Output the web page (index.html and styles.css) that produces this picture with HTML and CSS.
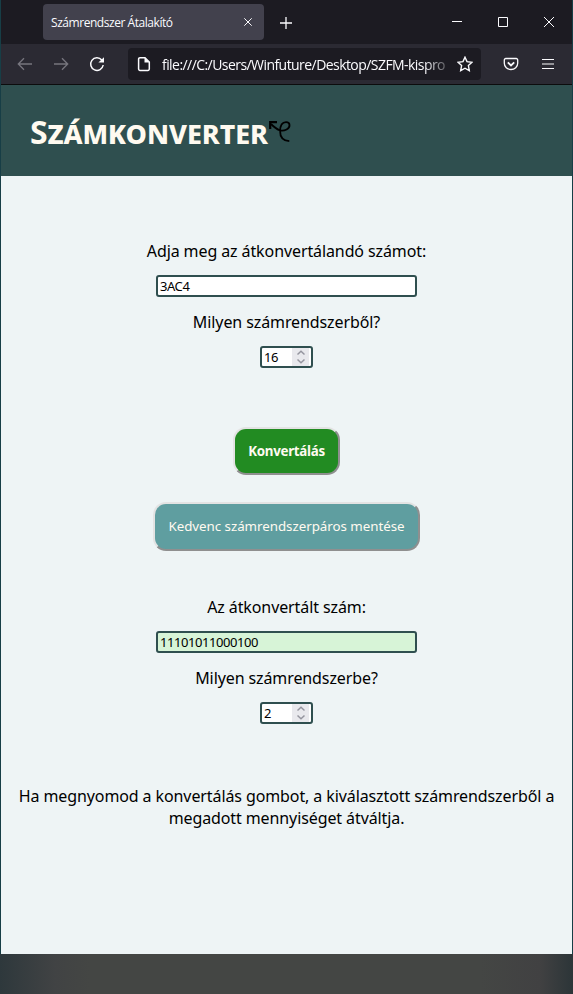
FILE: index.html
```html
<!DOCTYPE html>
<html lang="hu">
<head>
<meta charset="utf-8">
<title>Számrendszer Átalakító</title>
<link rel="stylesheet" href="styles.css">
</head>
<body>
<div class="window">
  <div class="tabbar">
    <div class="tab">
      <span class="tab-title">Számrendszer Átalakító</span>
      <svg class="tab-close" width="8" height="8" viewBox="0 0 8 8"><path d="M0.3 0.3l7.4 7.4M7.7 0.3l-7.4 7.4"/></svg>
    </div>
    <svg class="new-tab" width="12" height="12" viewBox="0 0 12 12"><path d="M6 0v12M0 6h12"/></svg>
    <div class="controls">
      <svg width="10" height="10" viewBox="0 0 10 10"><path d="M0 4.5h10"/></svg>
      <svg width="10" height="10" viewBox="0 0 10 10"><path d="M.5 .5h9v9h-9z"/></svg>
      <svg width="10" height="10" viewBox="0 0 10 10"><path d="M0 0l10 10M10 0L0 10"/></svg>
    </div>
  </div>
  <div class="toolbar">
    <svg class="nav dim" width="16" height="16" viewBox="0 0 16 16"><path d="M15 8H1.5M7 2.3L1.3 8L7 13.7"/></svg>
    <svg class="nav dim" width="16" height="16" viewBox="0 0 16 16"><path d="M1 8h13.5M9 2.3L14.7 8L9 13.7"/></svg>
    <svg class="nav reload" width="16" height="16" viewBox="0 0 16 16"><path d="M12.8 4A6.3 6.3 0 1 0 14.2 9"/><path class="solid" d="M15 1.2V6.6H9.4z"/></svg>
    <div class="urlbar">
      <svg width="14" height="16" viewBox="0 0 14 16"><path d="M3 1.7h5l4.3 4.3v7a1.4 1.4 0 0 1-1.4 1.4H3A1.4 1.4 0 0 1 1.6 13V3.1A1.4 1.4 0 0 1 3 1.7z"/><path class="solid" d="M7.5 1.5V6.5h5z"/></svg>
      <span class="url">file:///C:/Users/Winfuture/Desktop/SZFM-kispro</span>
      <svg class="star" width="16" height="16" viewBox="0 0 16 16"><path d="M8 1.2l2 4.400 5 .7-3.600 3.300 .9 5L8 12.200l-4.300 2.400 .9-5L1 6.300l5-.7z"/></svg>
    </div>
    <svg class="pocket" width="16" height="14" viewBox="0 0 16 14"><path d="M2.8 1.5h10.4a1.5 1.5 0 0 1 1.5 1.5v3.3a6.7 6.2 0 0 1-13.4 0V3a1.5 1.5 0 0 1 1.5-1.5z"/><path class="thick" d="M4.8 5.3L8 8.4l3.2-3.1"/></svg>
    <svg class="menu" width="12" height="10" viewBox="0 0 12 10"><path d="M0 .5h12M0 5h12M0 9.5h12"/></svg>
  </div>
  <header class="header">
    <h1>Számkonverter</h1>
    <svg class="logo" width="22" height="22" viewBox="0 0 22 22"><path d="M20.3 20.2C14 19.7 11 15.5 11.1 10C11.2 4 13.6 1.3 17 1.2C21.5 1.1 21.7 6.5 17.6 8.5C12.5 11 8.5 9.5 2 3"/><path class="head" d="M1.2 8V1.2H8"/></svg>
  </header>
  <main class="main">
    <label>Adja meg az átkonvertálandó számot:</label>
    <div class="field">3AC4</div>
    <label>Milyen számrendszerből?</label>
    <div class="field number">16<svg class="spin" width="17" height="18" viewBox="0 0 17 18"><path d="M5.5 6.5l3.5-3.2 3.5 3.2M5.5 11.5l3.5 3.2 3.5-3.2"/></svg></div>
    <button class="convert">Konvertálás</button>
    <button class="save">Kedvenc számrendszerpáros mentése</button>
    <label>Az átkonvertált szám:</label>
    <div class="field result">11101011000100</div>
    <label>Milyen számrendszerbe?</label>
    <div class="field number">2<svg class="spin" width="17" height="18" viewBox="0 0 17 18"><path d="M5.5 6.5l3.5-3.2 3.5 3.2M5.5 11.5l3.5 3.2 3.5-3.2"/></svg></div>
    <p>Ha megnyomod a konvertálás gombot, a kiválasztott számrendszerből a megadott mennyiséget átváltja.</p>
  </main>
</div>
<div class="desktop"></div>
</body>
</html>
```
FILE: styles.css
```css
* { box-sizing: border-box; }
body { margin: 0; width: 573px; height: 994px; overflow: hidden; background: #173e46; font-family: "Noto Sans", sans-serif; color: #000; }
svg { display: block; flex: none; fill: none; stroke: #fbfbfe; }
.solid { fill: #fbfbfe; stroke: none; }
.window { margin: 0 1px; height: 954px; background: #eef4f5; }
.tabbar { height: 44px; background: #1c1b22; display: flex; align-items: center; padding-left: 42px; }
.tab { width: 221px; height: 36px; border-radius: 4px; background: #42414d; color: #fbfbfe; display: flex; align-items: center; justify-content: space-between; padding: 0 12px 0 8px; }
.tab-title { margin-top: 2px; font: 12px/16px "Open Sans", sans-serif; letter-spacing: -0.45px; white-space: nowrap; }
.new-tab { margin: 1px 0 0 16px; stroke-width: 1.3; }
.controls { display: flex; gap: 36px; margin: 0 18px 0 auto; }
.toolbar { height: 41px; padding: 0 18px 1px 16px; background: #2b2a33; border-bottom: 1px solid #0c0c0d; display: flex; align-items: center; }
.nav { margin-right: 20px; stroke-width: 1.3; }
.dim { stroke: #77767e; }
.reload { margin: 1px 23px 0 0; stroke-width: 1.5; }
.urlbar { width: 353px; height: 32px; border-radius: 4px; background: #1c1b22; color: #fbfbfe; display: flex; align-items: center; padding: 0 8px 0 9px; stroke-width: 1.5; }
.url { width: 290px; margin: 2px 0 0 11px; overflow: hidden; white-space: nowrap; font: 14px/20px "Open Sans", sans-serif; letter-spacing: -0.56px; -webkit-mask-image: linear-gradient(90deg, #000 262px, transparent 292px); mask-image: linear-gradient(90deg, #000 262px, transparent 292px); }
.star { margin-left: auto; stroke-width: 1.4; }
.pocket { margin-left: 22px; stroke-width: 1.3; }
.thick { stroke-width: 1.8; }
.menu { margin-left: auto; stroke-width: 1.2; }
.header { height: 91px; background: #2f4f4f; display: flex; align-items: center; padding: 2px 0 0 29px; }
h1 { margin: 0; color: #fffaf0; font: small-caps bold 32px/44px "Noto Sans", sans-serif; letter-spacing: -0.08px; }
.logo { margin-left: 1px; stroke: #000; stroke-width: 1.8; }
.head { stroke-width: 2.2; }
.main { padding-top: 64px; display: flex; flex-direction: column; align-items: center; }
label, p { font-size: 16px; line-height: 22px; text-align: center; letter-spacing: -0.1px; }
.field { width: 261px; height: 22px; margin: 13px 0 14px; border: 2px solid #2f4f4f; border-radius: 3px; background: #fff; padding-left: 2px; font-size: 13px; line-height: 18px; letter-spacing: -0.43px; display: flex; justify-content: space-between; }
.result { background: #d7f4d7; }
.number { width: 53px; padding-right: 2px; }
.spin { background: #e9e9ed; stroke: #95959f; stroke-width: 1.5; }
button { font: 13.333px/18px "Noto Sans", sans-serif; color: #fffaf0; border: 2px outset #e3e3e3; border-radius: 13px; padding: 0 0 1px; }
.convert { width: 107px; height: 48px; margin-top: 45px; background: #228b22; font-weight: bold; letter-spacing: -0.28px; }
.save { width: 267px; height: 49px; margin: 27px 0 45px; padding-bottom: 2px; background: #5f9ea0; letter-spacing: -0.03px; }
p { width: 555px; margin: 47px 0 0; }
.desktop { height: 40px; background: linear-gradient(90deg, #2e383c, #414344 55px, #444644 90px, #444644 480px, #414142 540px, #2c3538); }
```
